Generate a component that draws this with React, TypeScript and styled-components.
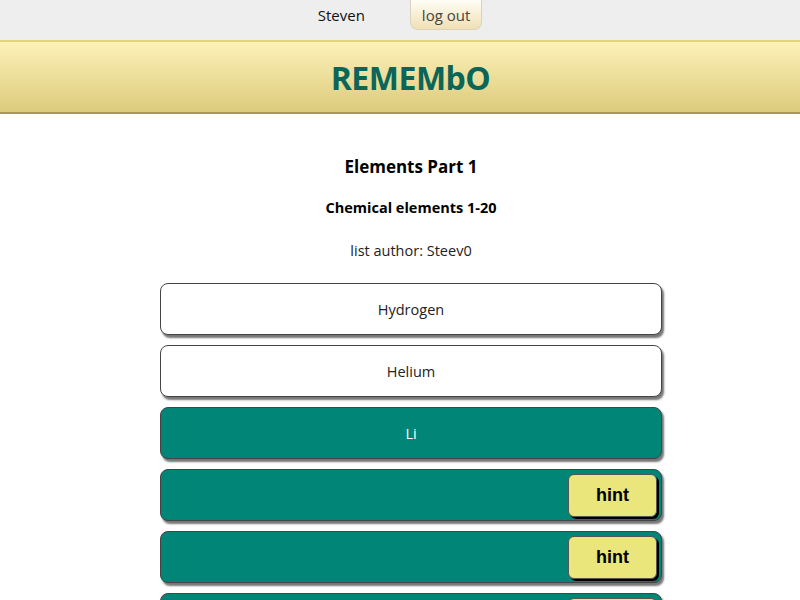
import React from 'react';
import styled, { createGlobalStyle } from 'styled-components';

const GlobalStyle = createGlobalStyle`
    body {
        margin: 0;
        background: #ffffff;
        font-family: "Open Sans", "Noto Sans", sans-serif;
        overflow: hidden;
    }
`;

const Page = styled.div`
    display: flex;
    flex-direction: column;
    min-height: 600px;
`;

const TopBar = styled.div`
    height: 40px;
    background: #eeeeee;
    display: flex;
    justify-content: center;
    align-items: flex-start;
    gap: 45px;
`;

const UserName = styled.span`
    font-size: 15px;
    color: #111;
    line-height: 30px;
`;

const LogoutButton = styled.button`
    height: 30px;
    padding: 0 11px;
    border: 1px solid #d9d3c0;
    border-top: none;
    border-radius: 0 0 8px 8px;
    background: linear-gradient(to bottom, #fffdf6, #f1e0b4);
    font-family: inherit;
    font-size: 15px;
    color: #444;
`;

const Header = styled.header`
    height: 70px;
    border-top: 2px solid #e2d27a;
    border-bottom: 2px solid #a8994f;
    background: linear-gradient(to bottom, #fdf1b8, #dccb7c);
    display: flex;
    justify-content: center;
    align-items: center;
    padding-left: 21px;
`;

const Title = styled.h1`
    margin: 0;
    font-size: 32px;
    font-weight: 700;
    color: #0b6659;
    letter-spacing: -0.5px;
`;

const Content = styled.main`
    display: flex;
    flex-direction: column;
    align-items: center;
    padding-left: 22px;
    padding-top: 40px;
`;

const ListName = styled.h2`
    margin: 0;
    font-size: 17px;
    font-weight: 700;
    color: #000;
    height: 25px;
    line-height: 25px;
`;

const ListDescription = styled.h3`
    margin: 18px 0 0;
    font-size: 14.5px;
    font-weight: 700;
    color: #000;
    height: 22px;
    line-height: 22px;
`;

const Author = styled.p`
    margin: 20px 0 0;
    font-size: 14.5px;
    color: #222;
    height: 24px;
    line-height: 24px;
`;

const CardList = styled.div`
    display: flex;
    flex-direction: column;
    gap: 10px;
    margin-top: 20px;
`;

const Card = styled.div<{ $filled: boolean; $hint: boolean }>`
    width: 500px;
    height: 50px;
    box-sizing: content-box;
    border: 1px solid #444;
    border-radius: 8px;
    box-shadow: 2px 3px 2px #777;
    background: ${(p) => (p.$filled ? '#008577' : '#ffffff')};
    color: ${(p) => (p.$filled ? '#ffffff' : '#222')};
    font-size: 14.5px;
    display: flex;
    align-items: center;
    justify-content: ${(p) => (p.$hint ? 'flex-end' : 'center')};
`;

const HintButton = styled.button`
    width: 89px;
    height: 43px;
    margin-right: 4px;
    border: 1px solid #555;
    border-radius: 6px;
    box-shadow: 2px 2px 0 #000;
    background: #eae67c;
    font-family: "Liberation Sans", Arial, sans-serif;
    font-size: 18px;
    font-weight: 700;
    color: #000;
`;

type Item = { text: string; filled: boolean; hint: boolean };

const items: Item[] = [
    { text: 'Hydrogen', filled: false, hint: false },
    { text: 'Helium', filled: false, hint: false },
    { text: 'Li', filled: true, hint: false },
    { text: '', filled: true, hint: true },
    { text: '', filled: true, hint: true },
    { text: '', filled: true, hint: true },
];

export default function App() {
    return (
        <Page>
            <GlobalStyle />
            <TopBar>
                <UserName>Steven</UserName>
                <LogoutButton>log out</LogoutButton>
            </TopBar>
            <Header>
                <Title>REMEMbO</Title>
            </Header>
            <Content>
                <ListName>Elements Part 1</ListName>
                <ListDescription>Chemical elements 1-20</ListDescription>
                <Author>list author: Steev0</Author>
                <CardList>
                    {items.map((item, index) => (
                        <Card key={index} $filled={item.filled} $hint={item.hint}>
                            {item.hint ? <HintButton>hint</HintButton> : item.text}
                        </Card>
                    ))}
                </CardList>
            </Content>
        </Page>
    );
}
